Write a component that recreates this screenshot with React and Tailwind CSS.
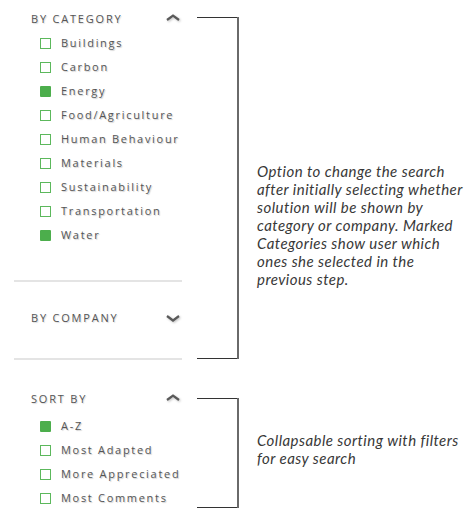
import React from "react";

const font = { fontFamily: '"Open Sans", "DejaVu Sans", sans-serif' };

function Chevron({ up }) {
  return (
    <svg width="14" height="7" viewBox="0 0 14 7" className="drop-shadow-[1px_1px_1px_rgba(0,0,0,0.25)]">
      <path
        d={up ? "M1 6 L7 1.5 L13 6" : "M1 1 L7 5.5 L13 1"}
        fill="none"
        stroke="#5a5a5a"
        strokeWidth="2.2"
      />
    </svg>
  );
}

function Box({ checked }) {
  return checked ? (
    <span className="block w-[11px] h-[11px] bg-[#4cae4c] rounded-[1px]" />
  ) : (
    <span className="block w-[11px] h-[11px] border-[1.5px] border-[#5cb85c]" />
  );
}

function Item({ label, checked }) {
  return (
    <div className="flex items-center h-6 pl-[26px] whitespace-nowrap">
      <Box checked={checked} />
      <span className="ml-[10px] text-[11px] tracking-[1.7px] text-[#555] [text-shadow:1px_1px_1px_rgba(0,0,0,0.2)]">
        {label}
      </span>
    </div>
  );
}

function Header({ label, up, className = "" }) {
  return (
    <div className={"flex items-center justify-between h-6 pl-[17px] pr-[2px] whitespace-nowrap " + className}>
      <span className="text-[11px] tracking-[1.8px] text-[#555] [text-shadow:1px_1px_1px_rgba(0,0,0,0.15)]">{label}</span>
      <Chevron up={up} />
    </div>
  );
}

const cats = [
  ["Buildings", false],
  ["Carbon", false],
  ["Energy", true],
  ["Food/Agriculture", false],
  ["Human Behaviour", false],
  ["Materials", false],
  ["Sustainability", false],
  ["Transportation", false],
  ["Water", true],
];

const sorts = [
  ["A-Z", true],
  ["Most Adapted", false],
  ["More Appreciated", false],
  ["Most Comments", false],
];

const noteCls =
  "ml-[18px] text-[15px] leading-[18px] italic tracking-[0.45px] text-[#383838] w-[212px]";
const noteFont = { fontFamily: 'Lato, "Open Sans", sans-serif' };

export default function App() {
  return (
    <div className="w-[468px] h-[521px] bg-white overflow-hidden" style={font}>
      <div className="flex items-start">
        <div className="ml-[14px] w-[168px] shrink-0">
          <Header label="BY CATEGORY" up className="mt-[7px] [&>svg]:-translate-y-[2px]" />
          {cats.map(([l, c]) => (
            <Item key={l} label={l} checked={c} />
          ))}
          <div className="h-[33px]" />
          <div className="h-[2px] bg-[#e4e4e4]" />
          <Header label="BY COMPANY" className="mt-[24px]" />
          <div className="h-[28px]" />
          <div className="h-[2px] bg-[#e4e4e4]" />
        </div>
        <div className="ml-[15px] mt-[17px] w-[42px] h-[342px] shrink-0 border-t border-b border-[#333] relative">
          <div className="absolute right-0 -top-px -bottom-px w-[2px] bg-[#6a6a6a]" />
        </div>
        <p className={noteCls + " mt-[162px]"} style={noteFont}>
          Option to change the search after initially selecting whether solution will be shown by
          category or company. Marked Categories show user which ones she selected in the previous step.
        </p>
      </div>
      <div className="flex items-start">
        <div className="ml-[14px] w-[168px] pt-[27px] shrink-0">
          <Header label="SORT BY" up className="[&>svg]:-translate-y-[2px]" />
          <div className="mt-[3px]">
            {sorts.map(([l, c]) => (
              <Item key={l} label={l} checked={c} />
            ))}
          </div>
        </div>
        <div className="ml-[15px] mt-[38px] w-[42px] h-[110px] shrink-0 border-t border-b border-[#333] relative">
          <div className="absolute right-0 -top-px -bottom-px w-[2px] bg-[#6a6a6a]" />
        </div>
        <p className={noteCls + " mt-[71px]"} style={noteFont}>
          Collapsable sorting with filters for easy search
        </p>
      </div>
    </div>
  );
}
